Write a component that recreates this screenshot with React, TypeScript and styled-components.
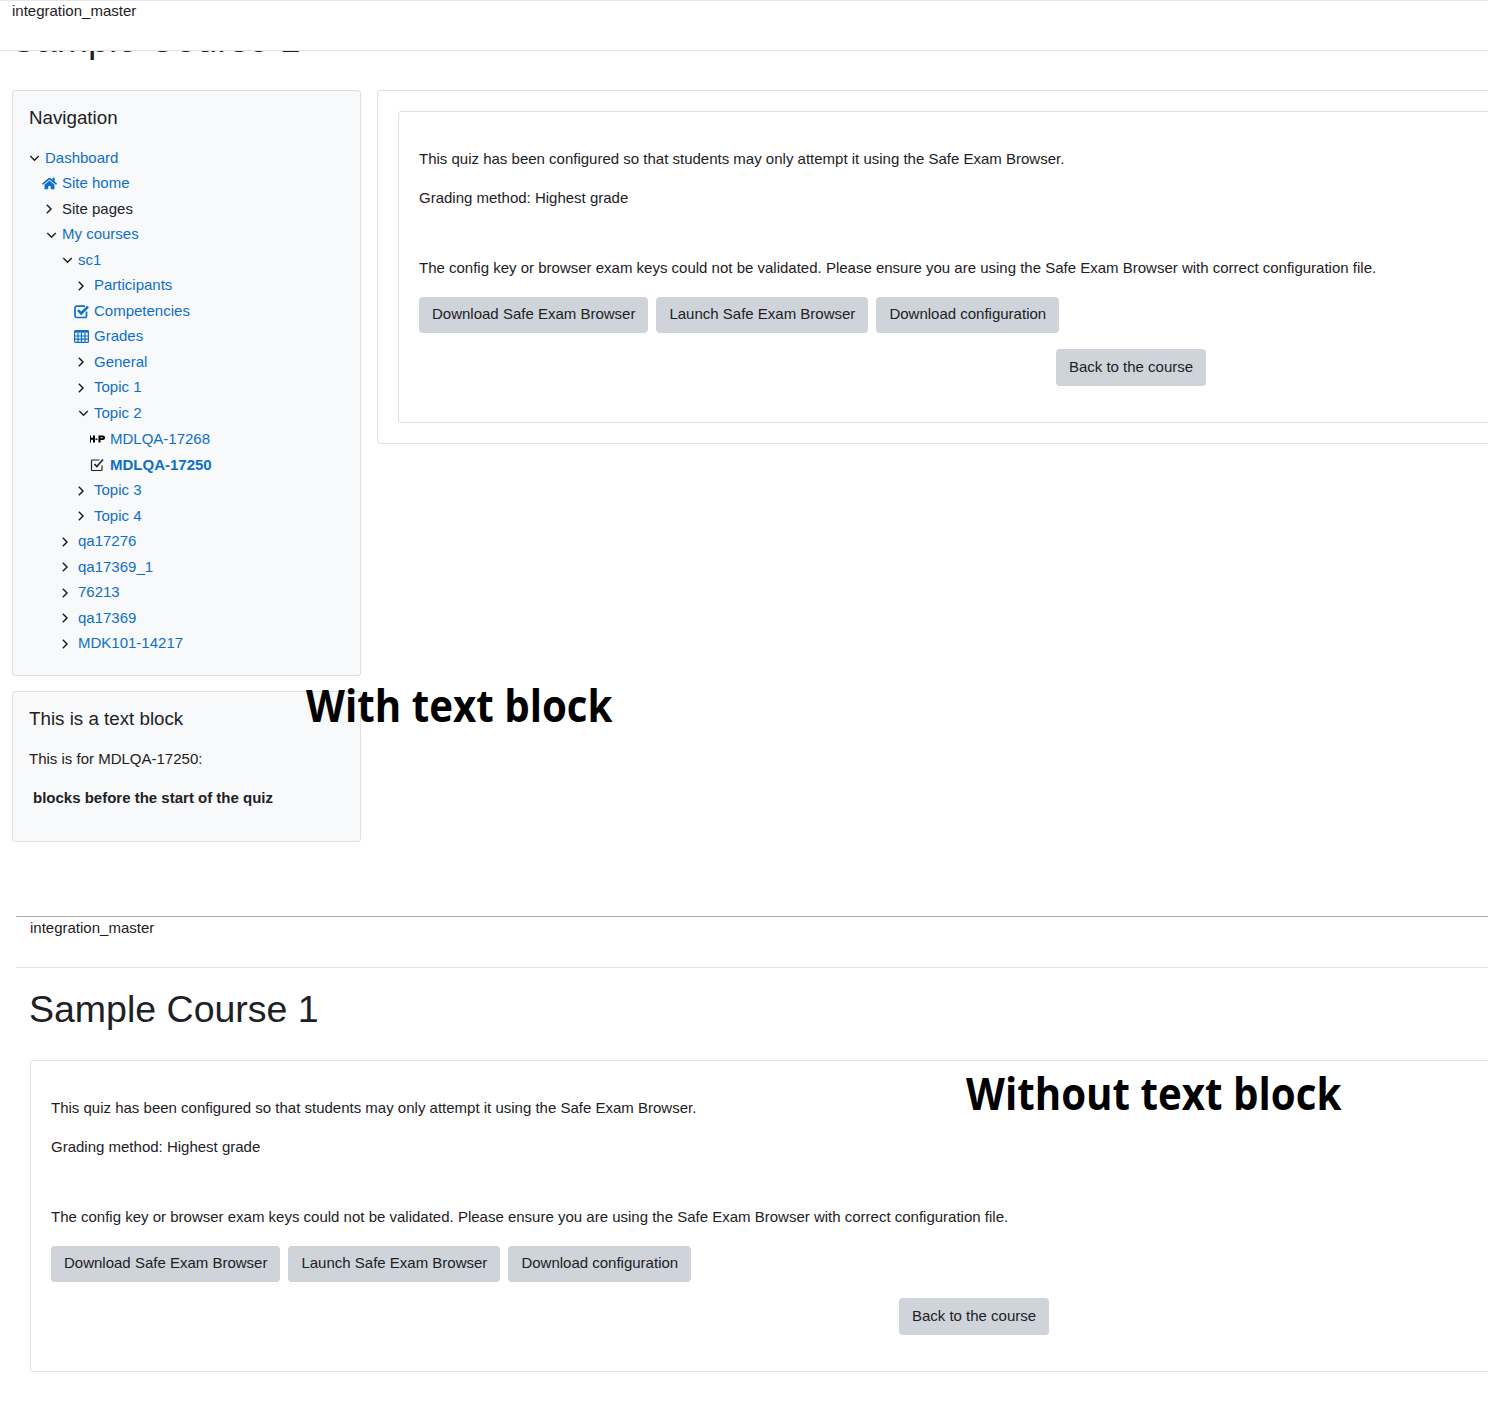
import styled, { createGlobalStyle } from "styled-components";
import { FaHome } from "react-icons/fa";

const GlobalStyle = createGlobalStyle`
  html, body {
    margin: 0;
    padding: 0;
    background: #fff;
  }

  body {
    font-family: "Liberation Sans", Arial, sans-serif;
    font-size: 15px;
    line-height: 22.5px;
    color: #1d2125;
  }
`;

type NavItem = {
  label: string;
  level: number;
  icon: "open" | "closed" | "home" | "check" | "table" | "hvp" | "quiz";
  plain?: boolean;
  current?: boolean;
};

const linkBlue = "#0f6fc6";

const navItems: NavItem[] = [
  { label: "Dashboard", level: 0, icon: "open" },
  { label: "Site home", level: 1, icon: "home" },
  { label: "Site pages", level: 1, icon: "closed", plain: true },
  { label: "My courses", level: 1, icon: "open" },
  { label: "sc1", level: 2, icon: "open" },
  { label: "Participants", level: 3, icon: "closed" },
  { label: "Competencies", level: 3, icon: "check" },
  { label: "Grades", level: 3, icon: "table" },
  { label: "General", level: 3, icon: "closed" },
  { label: "Topic 1", level: 3, icon: "closed" },
  { label: "Topic 2", level: 3, icon: "open" },
  { label: "MDLQA-17268", level: 4, icon: "hvp" },
  { label: "MDLQA-17250", level: 4, icon: "quiz", current: true },
  { label: "Topic 3", level: 3, icon: "closed" },
  { label: "Topic 4", level: 3, icon: "closed" },
  { label: "qa17276", level: 2, icon: "closed" },
  { label: "qa17369_1", level: 2, icon: "closed" },
  { label: "76213", level: 2, icon: "closed" },
  { label: "qa17369", level: 2, icon: "closed" },
  { label: "MDK101-14217", level: 2, icon: "closed" },
];

const NavIcon = ({ icon }: { icon: NavItem["icon"] }) => {
  if (icon === "home") return <FaHome size={15} color={linkBlue} />;
  if (icon === "check") {
    return (
      <svg width="16" height="15" viewBox="0 0 16 15" fill="none" stroke={linkBlue}>
        <path d="M12.5 7.5v4.2a1.8 1.8 0 0 1-1.8 1.8H2.8A1.8 1.8 0 0 1 1 11.7V4a1.8 1.8 0 0 1 1.8-1.8H11" strokeWidth="1.7" />
        <path d="M4 6.2 7.2 9.4 14 2.6" strokeWidth="2.6" />
      </svg>
    );
  }
  if (icon === "table") {
    return (
      <svg width="15" height="13" viewBox="0 0 15 13" fill="none" stroke={linkBlue} strokeWidth="1.2">
        <rect x="0.6" y="0.6" width="13.8" height="11.8" rx="1" />
        <path d="M0.5 1.6h14" strokeWidth="2.2" />
        <path d="M0.5 6h14M0.5 9.2h14M4 3v9.5M7.5 3v9.5M11 3v9.5" />
      </svg>
    );
  }
  if (icon === "open" || icon === "closed") {
    return (
      <svg width="14" height="14" viewBox="0 0 14 14" fill="none">
        <path
          d={icon === "open" ? "M4.3 5 8.5 9.2 12.7 5" : "M3.8 2.8 8 7 3.8 11.2"}
          stroke="#1d2125"
          strokeWidth="1.5"
        />
      </svg>
    );
  }
  if (icon === "hvp") {
    return (
      <svg width="16" height="16" viewBox="0 0 16 16" fill="#000">
        <path d="M-1 4.5h2v2.3h2V4.5h2v7H3V8.8H1v2.7h-2z" />
        <path d="M5.5 7.5h2v1.3h-2z" />
        <path d="M8.5 4.5h4.2c1.4 0 2.3.9 2.3 2.2s-.9 2.3-2.3 2.3h-2.2v2.5h-2zm2 1.8v1h1.6c.4 0 .7-.2.7-.5s-.3-.5-.7-.5z" />
      </svg>
    );
  }
  return (
    <svg width="16" height="16" viewBox="0 0 16 16" fill="none" stroke="#1d2125">
      <path d="M12 8.5v4.2a.8.8 0 0 1-.8.8H2.3a.8.8 0 0 1-.8-.8V3.8a.8.8 0 0 1 .8-.8h7.2" strokeWidth="1.2" />
      <path d="M4.5 7l2.3 2.5L13 2.5" strokeWidth="1.6" />
    </svg>
  );
};

const QuizCard = ({ contentWidth }: { contentWidth: number }) => (
  <InnerCard>
    <CardContent $width={contentWidth}>
      <Para>This quiz has been configured so that students may only attempt it using the Safe Exam Browser.</Para>
      <Para>Grading method: Highest grade</Para>
      <Warning>
        The config key or browser exam keys could not be validated. Please ensure you are using the Safe Exam Browser
        with correct configuration file.
      </Warning>
      <ButtonRow>
        <GreyButton>Download Safe Exam Browser</GreyButton>
        <GreyButton>Launch Safe Exam Browser</GreyButton>
        <GreyButton>Download configuration</GreyButton>
      </ButtonRow>
      <BackRow>
        <GreyButton>Back to the course</GreyButton>
      </BackRow>
    </CardContent>
  </InnerCard>
);

const App = () => {
  return (
    <Page>
      <GlobalStyle />
      <TopSection>
        <TopBar>integration_master</TopBar>
        <HiddenTitle>
          <CourseTitle>Sample Course 1</CourseTitle>
        </HiddenTitle>
        <Columns>
          <Sidebar>
            <Block>
              <BlockTitle>Navigation</BlockTitle>
              <NavList>
                {navItems.map((item) => (
                  <NavRow
                    key={item.label}
                    $level={item.level}
                    $plain={item.plain}
                    $current={item.current}
                    $tall={item.icon === "hvp"}
                  >
                    <IconSlot $chevron={item.icon === "open" || item.icon === "closed"}>
                      <NavIcon icon={item.icon} />
                    </IconSlot>
                    {item.label}
                  </NavRow>
                ))}
              </NavList>
            </Block>
            <TextBlock>
              <BlockTitle>This is a text block</BlockTitle>
              <BlockText>This is for MDLQA-17250:</BlockText>
              <BlockStrong>blocks before the start of the quiz</BlockStrong>
            </TextBlock>
          </Sidebar>
          <OuterCard>
            <QuizCard contentWidth={1424} />
          </OuterCard>
        </Columns>
        <Note $left={306} $top={675}>With text block</Note>
      </TopSection>

      <BottomSection>
        <PlainBar>integration_master</PlainBar>
        <BottomBody>
          <CourseTitle>Sample Course 1</CourseTitle>
          <QuizCard contentWidth={1846} />
        </BottomBody>
        <Note $left={950} $top={147}>Without text block</Note>
      </BottomSection>
    </Page>
  );
};

export default App;

const Page = styled.div`
  width: 1488px;
  height: 1428px;
  overflow: hidden;
  background: #fff;
`;

const TopSection = styled.section`
  position: relative;
  height: 916px;
`;

const TopBar = styled.header`
  box-sizing: border-box;
  height: 51px;
  padding: 0 12px;
  border-top: 1px solid #e6e6e6;
  border-bottom: 1px solid #e3e4e5;
  line-height: 20px;
`;

const HiddenTitle = styled.div`
  height: 10px;
  padding-left: 11px;
  overflow: hidden;

  h1 {
    margin-top: -34px;
  }
`;

const CourseTitle = styled.h1`
  margin: 0;
  font-size: 37.5px;
  font-weight: 400;
  line-height: 45px;
  color: #1d2125;
  white-space: nowrap;
`;

const Columns = styled.div`
  display: flex;
  align-items: flex-start;
  gap: 16px;
  margin-top: 29px;
  padding-left: 12px;
`;

const Sidebar = styled.aside`
  display: flex;
  flex: none;
  flex-direction: column;
  gap: 15px;
  width: 349px;
`;

const Block = styled.div`
  box-sizing: border-box;
  height: 586px;
  padding: 16px;
  background: #f8f9fa;
  border: 1px solid #dfdfe0;
  border-radius: 3px;
`;

const TextBlock = styled(Block)`
  height: 151px;
`;

const BlockTitle = styled.h5`
  margin: 0 0 8px;
  font-size: 18.75px;
  font-weight: 400;
  line-height: 22.5px;
  color: #1d2125;
`;

const NavList = styled.ul`
  margin: 15.9px 0 0;
  padding: 0;
  list-style: none;
`;

const NavRow = styled.li<{ $level: number; $plain?: boolean; $current?: boolean; $tall?: boolean }>`
  display: flex;
  align-items: center;
  height: ${(p) => (p.$tall ? 26.5 : 25.5)}px;
  padding-left: ${(p) => p.$level * 16 + (p.$level > 0 ? 1 : 0)}px;
  color: ${(p) => (p.$plain ? "#1d2125" : linkBlue)};
  font-weight: ${(p) => (p.$current ? 700 : 400)};
  white-space: nowrap;
`;

const IconSlot = styled.span<{ $chevron?: boolean }>`
  display: flex;
  flex: none;
  align-items: center;
  justify-content: ${(p) => (p.$chevron ? "center" : "flex-start")};
  box-sizing: border-box;
  width: 16px;
  margin-left: -4px;
  margin-right: 4px;
`;

const BlockText = styled.p`
  margin: 17px 0 0;
`;

const BlockStrong = styled.p`
  margin: 17px 0 0;
  padding-left: 4px;
  font-weight: 700;
`;

const OuterCard = styled.div`
  flex: none;
  box-sizing: border-box;
  width: 1480px;
  padding: 20px;
  background: #fff;
  border: 1px solid #dfdfe0;
  border-radius: 3px;
`;

const InnerCard = styled.div`
  width: max-content;
  padding: 36px 20px 20px;
  background: #fff;
  border: 1px solid #dfdfe0;
  border-radius: 3px;
`;

const CardContent = styled.div<{ $width: number }>`
  box-sizing: border-box;
  width: ${(p) => p.$width}px;
  height: 254px;
`;

const Para = styled.p`
  margin: 0 0 16.5px;
`;

const Warning = styled.p`
  margin: 47px 0 17.75px;
`;

const ButtonRow = styled.div`
  display: flex;
  gap: 8px;
`;

const BackRow = styled.div`
  display: flex;
  justify-content: center;
  margin-top: 16px;
`;

const GreyButton = styled.button`
  box-sizing: border-box;
  height: 36.5px;
  padding: 0 13px 1px;
  background: #ced4da;
  border: 0;
  border-radius: 4px;
  color: #1d2125;
  font: inherit;
  white-space: nowrap;
`;

const Note = styled.div<{ $left: number; $top: number }>`
  position: absolute;
  left: ${(p) => p.$left}px;
  top: ${(p) => p.$top}px;
  font-family: "Open Sans", sans-serif;
  font-size: 45px;
  font-weight: 700;
  line-height: 60px;
  color: #000;
  white-space: nowrap;
  transform: scaleX(0.895);
  transform-origin: left center;
`;

const BottomSection = styled.section`
  position: relative;
  margin-left: 16px;
`;

const PlainBar = styled.header`
  box-sizing: border-box;
  height: 52px;
  padding: 0 14px;
  border-top: 1px solid #aaa;
  border-bottom: 1px solid #e3e4e5;
  line-height: 22px;
`;

const BottomBody = styled.div`
  padding: 19px 14px 0;

  h1 {
    margin-bottom: 28px;
    margin-left: -1px;
  }
`;
